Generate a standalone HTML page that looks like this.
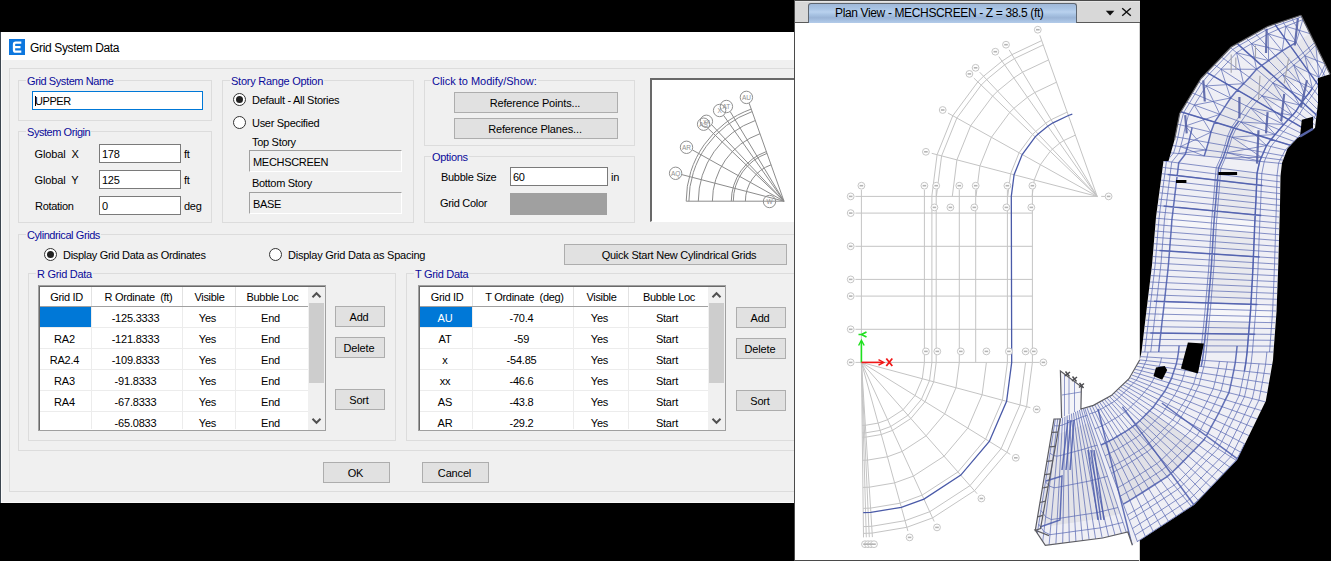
<!DOCTYPE html>
<html><head><meta charset="utf-8"><title>Grid System Data</title>
<style>
*{box-sizing:border-box;margin:0;padding:0}
html,body{width:1331px;height:561px;overflow:hidden;background:#000}
body{font-family:"Liberation Sans",sans-serif;font-size:11px;color:#000;position:relative}
.abs,.t,.grp,.lbl,.inp,.btn,.sunk,.radio{position:absolute}
.t{white-space:pre;line-height:13px;height:13px;letter-spacing:-0.3px;margin-top:1px}
#dlg{position:absolute;left:0;top:32px;width:795px;height:471px;background:#f0f0f0;border-left:1px solid #1c2b3a}
#ttl{position:absolute;left:0;top:0;width:794px;height:28px;background:#fff}
.grp{border:1px solid #dcdcdc}
.lbl{background:#f0f0f0;color:#0a0a9a;white-space:pre;line-height:13px;height:13px;padding:0 1px;letter-spacing:-0.3px;margin-top:1px}
.inp{background:#fff;border:1px solid #7a7a7a;line-height:18px;padding-left:2px;white-space:pre;letter-spacing:-0.25px}
.btn{background:#e1e1e1;border:1px solid #adadad;text-align:center;white-space:pre;letter-spacing:-0.16px;padding-top:1px;padding-right:2px}
.sunk{background:#f0f0f0;border:1px solid;border-color:#a0a0a0 #fff #fff #a0a0a0;line-height:22px;padding-left:3px;white-space:pre;letter-spacing:-0.3px}
.radio{width:13px;height:13px;border-radius:50%;border:1px solid #333;background:#fff}
.radio.on::after{content:"";position:absolute;left:2px;top:2px;width:7px;height:7px;border-radius:50%;background:#222}
.tbl{position:absolute;background:#fff;border:1px solid #a0a0a0}
.tbl .in{position:absolute;left:0;top:0;right:0;bottom:0;border:1px solid #696969;border-right:none;border-bottom:none}
.c{position:absolute;text-align:center;white-space:pre;line-height:13px;height:13px;letter-spacing:-0.3px}
.vl{position:absolute;width:1px;background:#e2e2e2}
.hl{position:absolute;height:1px;background:#e8e8e8}
</style></head><body>
<div class="abs" style="left:0px;top:32px;width:794px;height:471px;background:#f0f0f0"></div>
<div class="abs" style="left:0px;top:32px;width:1px;height:471px;background:#3c4650"></div>
<div class="abs" style="left:1px;top:60px;width:1px;height:443px;background:#fafafa"></div>
<div class="abs" style="left:1px;top:502px;width:793px;height:1px;background:#fafafa"></div>
<div class="abs" style="left:1px;top:32px;width:793px;height:28px;background:#fff"></div>
<svg class="abs" style="left:9px;top:39px" width="16" height="16" viewBox="0 0 16 16"><rect width="16" height="16" fill="#0c76de"/><path d="M12.3 3.7H6.7Q5 3.7 5 5.4V11Q5 12.7 6.7 12.7H12.3M5 8.2H11.5" fill="none" stroke="#fff" stroke-width="2.3"/></svg>
<div class="t" style="left:30px;top:40px;font-size:12px;letter-spacing:-0.35px;line-height:14px;height:14px">Grid System Data</div>
<div class="grp" style="left:9px;top:68px;width:800px;height:424px"></div>
<div class="grp" style="left:18px;top:80px;width:194px;height:41px"></div>
<div class="lbl" style="left:26px;top:74px;letter-spacing:-0.4px">Grid System Name</div>
<div class="abs" style="left:32px;top:91px;width:171px;height:19px;background:#fff;border:1px solid #0078d7;line-height:18px;padding-left:2px;white-space:pre;letter-spacing:-0.45px">UPPER</div>
<div class="abs" style="left:35px;top:96px;width:1px;height:10px;background:#000"></div>
<div class="grp" style="left:18px;top:131px;width:194px;height:92px"></div>
<div class="lbl" style="left:26px;top:125px;letter-spacing:-0.45px">System Origin</div>
<div class="t" style="left:34.5px;top:147px;letter-spacing:-0.12px">Global  X</div>
<div class="t" style="left:34.5px;top:173px;letter-spacing:-0.12px">Global  Y</div>
<div class="t" style="left:35px;top:199px;">Rotation</div>
<div class="inp" style="left:99px;top:144px;width:82px;height:19px;">178</div>
<div class="inp" style="left:99px;top:170px;width:82px;height:19px;">125</div>
<div class="inp" style="left:99px;top:196px;width:82px;height:19px;">0</div>
<div class="t" style="left:184px;top:147px;">ft</div>
<div class="t" style="left:184px;top:173px;">ft</div>
<div class="t" style="left:184px;top:199px;">deg</div>
<div class="grp" style="left:222px;top:80px;width:192px;height:143px"></div>
<div class="lbl" style="left:230px;top:74px;letter-spacing:-0.25px">Story Range Option</div>
<div class="radio on" style="left:233px;top:93px"></div>
<div class="t" style="left:252px;top:93px;">Default - All Stories</div>
<div class="radio" style="left:233px;top:116px"></div>
<div class="t" style="left:252px;top:116px;">User Specified</div>
<div class="t" style="left:252px;top:135px;">Top Story</div>
<div class="sunk" style="left:249px;top:150px;width:153px;height:22px;">MECHSCREEN</div>
<div class="t" style="left:252px;top:176px;">Bottom Story</div>
<div class="sunk" style="left:249px;top:192px;width:153px;height:22px;">BASE</div>
<div class="grp" style="left:424px;top:80px;width:211px;height:66px"></div>
<div class="lbl" style="left:431px;top:74px;letter-spacing:-0.02px">Click to Modify/Show:</div>
<div class="btn" style="left:454px;top:92px;width:164px;height:21px;line-height:19px">Reference Points...</div>
<div class="btn" style="left:454px;top:118px;width:164px;height:21px;line-height:19px">Reference Planes...</div>
<div class="grp" style="left:424px;top:156px;width:211px;height:67px"></div>
<div class="lbl" style="left:431px;top:150px;letter-spacing:-0.3px">Options</div>
<div class="t" style="left:441px;top:170px;">Bubble Size</div>
<div class="inp" style="left:510px;top:167px;width:98px;height:19px;">60</div>
<div class="t" style="left:611px;top:170px;">in</div>
<div class="t" style="left:440px;top:196px;">Grid Color</div>
<div class="abs" style="left:510px;top:193px;width:97px;height:22px;background:#a0a0a0"></div>
<div class="grp" style="left:18px;top:234px;width:783px;height:217px"></div>
<div class="lbl" style="left:26px;top:228px;letter-spacing:-0.42px">Cylindrical Grids</div>
<div class="radio on" style="left:44px;top:248px"></div>
<div class="t" style="left:63px;top:248px;">Display Grid Data as Ordinates</div>
<div class="radio" style="left:269px;top:248px"></div>
<div class="t" style="left:288px;top:248px;letter-spacing:-0.23px">Display Grid Data as Spacing</div>
<div class="btn" style="left:564px;top:244px;width:223px;height:21px;line-height:19px;padding-right:0;padding-left:7px;letter-spacing:-0.24px">Quick Start New Cylindrical Grids</div>
<div class="grp" style="left:28px;top:273px;width:368px;height:168px"></div>
<div class="lbl" style="left:36px;top:267px;letter-spacing:-0.3px">R Grid Data</div>
<div class="grp" style="left:406px;top:273px;width:405px;height:168px"></div>
<div class="lbl" style="left:414px;top:267px;letter-spacing:-0.3px">T Grid Data</div>
<div class="tbl" style="left:38px;top:285px;width:288px;height:146px"><div class="in"></div></div>
<div class="abs" style="left:40px;top:306px;width:268px;height:1px;background:#a0a0a0"></div>
<div class="abs" style="left:91px;top:287px;width:1px;height:19px;background:#e2e2e2"></div>
<div class="abs" style="left:91px;top:307px;width:1px;height:122px;background:#ececec"></div>
<div class="abs" style="left:182px;top:287px;width:1px;height:19px;background:#e2e2e2"></div>
<div class="abs" style="left:182px;top:307px;width:1px;height:122px;background:#ececec"></div>
<div class="abs" style="left:235px;top:287px;width:1px;height:19px;background:#e2e2e2"></div>
<div class="abs" style="left:235px;top:307px;width:1px;height:122px;background:#ececec"></div>
<div class="abs" style="left:308px;top:287px;width:1px;height:142px;background:#e8e8e8"></div>
<div class="abs" style="left:40px;top:327px;width:268px;height:1px;background:#ececec"></div>
<div class="abs" style="left:40px;top:348px;width:268px;height:1px;background:#ececec"></div>
<div class="abs" style="left:40px;top:369px;width:268px;height:1px;background:#ececec"></div>
<div class="abs" style="left:40px;top:390px;width:268px;height:1px;background:#ececec"></div>
<div class="abs" style="left:40px;top:411px;width:268px;height:1px;background:#ececec"></div>
<div class="c" style="left:41px;top:291px;width:51px">Grid ID</div>
<div class="c" style="left:93px;top:291px;width:91px">R Ordinate  (ft)</div>
<div class="c" style="left:183px;top:291px;width:53px">Visible</div>
<div class="c" style="left:236px;top:291px;width:73px">Bubble Loc</div>
<div class="abs" style="left:40px;top:307px;width:51px;height:20px;background:#0078d7"></div>
<div class="c" style="left:39px;top:312px;width:51px;color:#fff;letter-spacing:-0.2px"></div>
<div class="c" style="left:90px;top:312px;width:91px;color:#000;letter-spacing:-0.2px">-125.3333</div>
<div class="c" style="left:181px;top:312px;width:53px;color:#000;letter-spacing:-0.2px">Yes</div>
<div class="c" style="left:234px;top:312px;width:73px;color:#000;letter-spacing:-0.2px">End</div>
<div class="c" style="left:39px;top:333px;width:51px;color:#000;letter-spacing:-0.2px">RA2</div>
<div class="c" style="left:90px;top:333px;width:91px;color:#000;letter-spacing:-0.2px">-121.8333</div>
<div class="c" style="left:181px;top:333px;width:53px;color:#000;letter-spacing:-0.2px">Yes</div>
<div class="c" style="left:234px;top:333px;width:73px;color:#000;letter-spacing:-0.2px">End</div>
<div class="c" style="left:39px;top:354px;width:51px;color:#000;letter-spacing:-0.2px">RA2.4</div>
<div class="c" style="left:90px;top:354px;width:91px;color:#000;letter-spacing:-0.2px">-109.8333</div>
<div class="c" style="left:181px;top:354px;width:53px;color:#000;letter-spacing:-0.2px">Yes</div>
<div class="c" style="left:234px;top:354px;width:73px;color:#000;letter-spacing:-0.2px">End</div>
<div class="c" style="left:39px;top:375px;width:51px;color:#000;letter-spacing:-0.2px">RA3</div>
<div class="c" style="left:90px;top:375px;width:91px;color:#000;letter-spacing:-0.2px">-91.8333</div>
<div class="c" style="left:181px;top:375px;width:53px;color:#000;letter-spacing:-0.2px">Yes</div>
<div class="c" style="left:234px;top:375px;width:73px;color:#000;letter-spacing:-0.2px">End</div>
<div class="c" style="left:39px;top:396px;width:51px;color:#000;letter-spacing:-0.2px">RA4</div>
<div class="c" style="left:90px;top:396px;width:91px;color:#000;letter-spacing:-0.2px">-67.8333</div>
<div class="c" style="left:181px;top:396px;width:53px;color:#000;letter-spacing:-0.2px">Yes</div>
<div class="c" style="left:234px;top:396px;width:73px;color:#000;letter-spacing:-0.2px">End</div>
<div class="c" style="left:39px;top:417px;width:51px;color:#000;letter-spacing:-0.2px"></div>
<div class="c" style="left:90px;top:417px;width:91px;color:#000;letter-spacing:-0.2px">-65.0833</div>
<div class="c" style="left:181px;top:417px;width:53px;color:#000;letter-spacing:-0.2px">Yes</div>
<div class="c" style="left:234px;top:417px;width:73px;color:#000;letter-spacing:-0.2px">End</div>
<div class="abs" style="left:308px;top:287px;width:17px;height:143px;background:#f0f0f0"></div>
<div class="abs" style="left:309px;top:303px;width:15px;height:80px;background:#cdcdcd"></div>
<svg class="abs" style="left:311px;top:291px" width="11" height="8" viewBox="0 0 11 8"><path d="M1.5 6.2L5.5 2.2L9.5 6.2" fill="none" stroke="#505050" stroke-width="2"/></svg>
<svg class="abs" style="left:311px;top:417px" width="11" height="8" viewBox="0 0 11 8"><path d="M1.5 1.8L5.5 5.8L9.5 1.8" fill="none" stroke="#505050" stroke-width="2"/></svg>
<div class="tbl" style="left:418px;top:285px;width:308px;height:146px"><div class="in"></div></div>
<div class="abs" style="left:420px;top:306px;width:288px;height:1px;background:#a0a0a0"></div>
<div class="abs" style="left:472px;top:287px;width:1px;height:19px;background:#e2e2e2"></div>
<div class="abs" style="left:472px;top:307px;width:1px;height:122px;background:#ececec"></div>
<div class="abs" style="left:573px;top:287px;width:1px;height:19px;background:#e2e2e2"></div>
<div class="abs" style="left:573px;top:307px;width:1px;height:122px;background:#ececec"></div>
<div class="abs" style="left:628px;top:287px;width:1px;height:19px;background:#e2e2e2"></div>
<div class="abs" style="left:628px;top:307px;width:1px;height:122px;background:#ececec"></div>
<div class="abs" style="left:708px;top:287px;width:1px;height:142px;background:#e8e8e8"></div>
<div class="abs" style="left:420px;top:327px;width:288px;height:1px;background:#ececec"></div>
<div class="abs" style="left:420px;top:348px;width:288px;height:1px;background:#ececec"></div>
<div class="abs" style="left:420px;top:369px;width:288px;height:1px;background:#ececec"></div>
<div class="abs" style="left:420px;top:390px;width:288px;height:1px;background:#ececec"></div>
<div class="abs" style="left:420px;top:411px;width:288px;height:1px;background:#ececec"></div>
<div class="c" style="left:421px;top:291px;width:52px">Grid ID</div>
<div class="c" style="left:474px;top:291px;width:101px">T Ordinate  (deg)</div>
<div class="c" style="left:574px;top:291px;width:55px">Visible</div>
<div class="c" style="left:629px;top:291px;width:80px">Bubble Loc</div>
<div class="abs" style="left:420px;top:307px;width:52px;height:20px;background:#0078d7"></div>
<div class="c" style="left:419px;top:312px;width:52px;color:#fff;letter-spacing:-0.2px">AU</div>
<div class="c" style="left:471px;top:312px;width:101px;color:#000;letter-spacing:-0.2px">-70.4</div>
<div class="c" style="left:572px;top:312px;width:55px;color:#000;letter-spacing:-0.2px">Yes</div>
<div class="c" style="left:627px;top:312px;width:80px;color:#000;letter-spacing:-0.2px">Start</div>
<div class="c" style="left:419px;top:333px;width:52px;color:#000;letter-spacing:-0.2px">AT</div>
<div class="c" style="left:471px;top:333px;width:101px;color:#000;letter-spacing:-0.2px">-59</div>
<div class="c" style="left:572px;top:333px;width:55px;color:#000;letter-spacing:-0.2px">Yes</div>
<div class="c" style="left:627px;top:333px;width:80px;color:#000;letter-spacing:-0.2px">Start</div>
<div class="c" style="left:419px;top:354px;width:52px;color:#000;letter-spacing:-0.2px">x</div>
<div class="c" style="left:471px;top:354px;width:101px;color:#000;letter-spacing:-0.2px">-54.85</div>
<div class="c" style="left:572px;top:354px;width:55px;color:#000;letter-spacing:-0.2px">Yes</div>
<div class="c" style="left:627px;top:354px;width:80px;color:#000;letter-spacing:-0.2px">Start</div>
<div class="c" style="left:419px;top:375px;width:52px;color:#000;letter-spacing:-0.2px">xx</div>
<div class="c" style="left:471px;top:375px;width:101px;color:#000;letter-spacing:-0.2px">-46.6</div>
<div class="c" style="left:572px;top:375px;width:55px;color:#000;letter-spacing:-0.2px">Yes</div>
<div class="c" style="left:627px;top:375px;width:80px;color:#000;letter-spacing:-0.2px">Start</div>
<div class="c" style="left:419px;top:396px;width:52px;color:#000;letter-spacing:-0.2px">AS</div>
<div class="c" style="left:471px;top:396px;width:101px;color:#000;letter-spacing:-0.2px">-43.8</div>
<div class="c" style="left:572px;top:396px;width:55px;color:#000;letter-spacing:-0.2px">Yes</div>
<div class="c" style="left:627px;top:396px;width:80px;color:#000;letter-spacing:-0.2px">Start</div>
<div class="c" style="left:419px;top:417px;width:52px;color:#000;letter-spacing:-0.2px">AR</div>
<div class="c" style="left:471px;top:417px;width:101px;color:#000;letter-spacing:-0.2px">-29.2</div>
<div class="c" style="left:572px;top:417px;width:55px;color:#000;letter-spacing:-0.2px">Yes</div>
<div class="c" style="left:627px;top:417px;width:80px;color:#000;letter-spacing:-0.2px">Start</div>
<div class="abs" style="left:708px;top:287px;width:17px;height:143px;background:#f0f0f0"></div>
<div class="abs" style="left:709px;top:303px;width:15px;height:80px;background:#cdcdcd"></div>
<svg class="abs" style="left:711px;top:291px" width="11" height="8" viewBox="0 0 11 8"><path d="M1.5 6.2L5.5 2.2L9.5 6.2" fill="none" stroke="#505050" stroke-width="2"/></svg>
<svg class="abs" style="left:711px;top:417px" width="11" height="8" viewBox="0 0 11 8"><path d="M1.5 1.8L5.5 5.8L9.5 1.8" fill="none" stroke="#505050" stroke-width="2"/></svg>
<div class="btn" style="left:335px;top:306px;width:50px;height:21px;line-height:19px">Add</div>
<div class="btn" style="left:335px;top:337px;width:50px;height:21px;line-height:19px">Delete</div>
<div class="btn" style="left:335px;top:389px;width:50px;height:21px;line-height:19px">Sort</div>
<div class="btn" style="left:736px;top:307px;width:50px;height:21px;line-height:19px">Add</div>
<div class="btn" style="left:736px;top:338px;width:50px;height:21px;line-height:19px">Delete</div>
<div class="btn" style="left:736px;top:390px;width:50px;height:21px;line-height:19px">Sort</div>
<div class="btn" style="left:323px;top:462px;width:67px;height:21px;line-height:19px">OK</div>
<div class="btn" style="left:422px;top:462px;width:67px;height:21px;line-height:19px">Cancel</div>
<div class="abs" style="left:650px;top:78px;width:160px;height:144px;background:#fff;border:2px solid #696969;border-right:none;border-bottom:1px solid #fff"></div>
<svg class="abs" style="left:652px;top:80px" width="143" height="141" viewBox="652 80 143 141"><g fill="none" stroke="#8c8c8c" stroke-width="1"><path d="M686.2 201.2A97.8 97.8 0 0 1 751.2 109.1"/><path d="M688.9 201.2A95.1 95.1 0 0 1 752.1 111.6"/><path d="M698.3 201.2A85.7 85.7 0 0 1 755.3 120.5"/><path d="M712.4 201.2A71.6 71.6 0 0 1 760 133.7"/><path d="M731.3 201.2A52.7 52.7 0 0 1 766.3 151.6"/><path d="M733.3 201.2A50.7 50.7 0 0 1 767 153.4"/><path d="M745.4 201.2A38.6 38.6 0 0 1 771.1 164.8"/><path d="M784 201.2L686.2 201.2"/><path d="M784 201.2L681.8 174.6"/><path d="M784 201.2L692.3 149.9"/><path d="M784 201.2L708.2 128.5"/><path d="M784 201.2L711.8 124.9"/><path d="M784 201.2L723.6 115.4"/><path d="M784 201.2L730.2 111.6"/><path d="M784 201.2L749.1 103.1"/><circle cx="769.5" cy="201.5" r="6.2" stroke="#909090"/><circle cx="675.6" cy="173.3" r="6.2" stroke="#909090"/><circle cx="686.5" cy="147.3" r="6.2" stroke="#909090"/><circle cx="703.6" cy="124.2" r="6.2" stroke="#909090"/><circle cx="706.4" cy="121.3" r="6.2" stroke="#909090"/><circle cx="719.6" cy="110.5" r="6.2" stroke="#909090"/><circle cx="726.4" cy="106.5" r="6.2" stroke="#909090"/><circle cx="746.4" cy="97.4" r="6.2" stroke="#909090"/></g><g font-family="Liberation Sans" font-size="6.5" fill="#909090" text-anchor="middle"><text x="769.5" y="203.8">W</text><text x="675.6" y="175.6">AQ</text><text x="686.5" y="149.6">AR</text><text x="703.6" y="126.5">AS</text><text x="706.4" y="123.6">xx</text><text x="719.6" y="112.8">X</text><text x="726.4" y="108.8">AT</text><text x="746.4" y="99.7">AU</text></g></svg>
<div class="abs" style="left:794px;top:0;width:346px;height:561px;background:#fff"></div>
<div class="abs" style="left:794px;top:0;width:1px;height:561px;background:#4a4a4a"></div>
<div class="abs" style="left:1139px;top:0;width:1px;height:561px;background:#cfcfcf"></div>
<div class="abs" style="left:795px;top:560px;width:344px;height:1px;background:#4a4a4a"></div>
<div class="abs" style="left:795px;top:0;width:345px;height:23px;background:#d8d8d8;border-top:1px solid #4a4a4a;border-bottom:1px solid #5a5a5a"></div>
<div class="abs" style="left:795px;top:1px;width:345px;height:1px;background:#e6e6e6"></div>
<div class="abs" style="left:808px;top:3px;width:269px;height:20px;border:1px solid #5e6670;border-bottom:none;border-radius:3px 3px 0 0;background:linear-gradient(#a0b8d8 0%,#a9c4e4 25%,#b9d1ee 42%,#a9c4e4 55%,#9ab4d6 72%,#a6c0e1 86%,#b3cbe9 100%)"></div>
<div class="t" style="left:835px;top:5px;font-size:12px;line-height:14px;height:14px;letter-spacing:-0.36px">Plan View - MECHSCREEN - Z = 38.5 (ft)</div>
<svg class="abs" style="left:1104px;top:6px" width="30" height="13" viewBox="1104 6 30 13"><path d="M1105.8 10.8h8.6l-4.3 4.6z" fill="#111"/><path d="M1122.2 8.2l8.6 7.6M1130.8 8.2l-8.6 7.6" stroke="#111" stroke-width="1.4" fill="none"/></svg>
<svg class="abs" style="left:796px;top:23px" width="343" height="536" viewBox="796 23 343 536"><g fill="none" stroke="#c4c4c4" stroke-width="1"><path d="M931.8 196.4L937.1 154.7L952.8 115.7L977.8 81.9L983.6 76.2L1002 61.2L1012 54.6L1041.7 40.6"/><path d="M936.4 196.4L941.6 155.9L956.9 118L981.2 85.1L986.7 79.6L1004.6 64.9L1014.4 58.6L1043.3 44.9"/><path d="M952.3 196.4L956.9 159.9L970.7 125.7L992.6 96.1L997.6 91.1L1013.8 77.9L1022.5 72.2L1048.6 59.9"/><path d="M976 196.4L979.9 165.9L991.4 137.3L1009.7 112.5L1013.9 108.3L1027.4 97.3L1034.8 92.5L1056.5 82.2"/><path d="M1007.7 196.4L1010.6 173.8L1019.1 152.7L1032.6 134.4L1035.7 131.4L1045.7 123.2L1051.1 119.7L1067.2 112.1"/><path d="M1032.1 196.4L1034.2 180L1040.4 164.7L1050.2 151.4L1052.5 149.1L1059.7 143.2L1063.7 140.6L1075.4 135.1"/><path d="M1097.2 196.4L931.7 153.3"/><path d="M1097.2 196.4L947.9 113"/><path d="M1097.2 196.4L973.8 78"/><path d="M1097.2 196.4L979.7 72.2"/><path d="M1097.2 196.4L998.8 56.6"/><path d="M1097.2 196.4L1009.1 49.8"/><path d="M1097.2 196.4L1039.8 35.3"/><path d="M855.4 196.4H1032.4"/><path d="M855.4 213.1H1032.4"/><path d="M855.4 246.3H1032.4"/><path d="M855.4 279.4H1032.4"/><path d="M855.4 296.1H1032.4"/><path d="M855.4 329.3H1032.4"/><path d="M855.4 362.4H1032.4"/><path d="M1032.4 196.4H1097.2M1101.2 196.4h4"/><path d="M1032.4 362.4h7"/><path d="M861.4 190V362.4"/><path d="M924.4 190V362.4"/><path d="M931.9 196.4V362.4"/><path d="M936.2 190V362.4"/><path d="M959.3 190V362.4"/><path d="M975.7 190V362.4"/><path d="M1007.4 190V362.4"/><path d="M1032.4 190V362.4"/><path d="M924.4 362.4L922.3 378.7L915 395.5L903.1 409.7L887.6 419.7L878.1 423.1L865.4 425.3L862.2 425.4"/><path d="M931.9 362.4L929.5 380.6L921.4 399.4L908 415.3L890.7 426.5L880.1 430.4L865.8 432.8L862.3 432.9"/><path d="M936.2 362.4L933.7 381.8L925 401.7L910.9 418.5L892.5 430.4L881.3 434.5L866.1 437.1L862.3 437.2"/><path d="M959.3 362.4L956 387.7L944.7 413.8L926.1 435.8L902.2 451.4L887.4 456.8L867.5 460.1L862.6 460.3"/><path d="M986.4 362.4L982.1 394.8L967.8 428.1L944.1 456.2L913.4 476.1L894.6 482.9L869.2 487.2L862.9 487.4"/><path d="M1007.4 362.4L1002.4 400.2L985.6 439.1L958 471.9L922.2 495.1L900.2 503.2L870.6 508.1L863.2 508.4"/><path d="M1025.6 362.4L1020 404.9L1001.1 448.7L970 485.6L929.8 511.7L905 520.7L871.7 526.3L863.4 526.6"/><path d="M1032.4 362.4L1026.6 406.7L1006.9 452.3L974.5 490.7L932.6 517.9L906.8 527.3L872.1 533.1L863.5 533.4"/><path d="M861.4 362.4L1030.4 407.7"/><path d="M861.4 362.4L1010.3 454.4"/><path d="M861.4 362.4L977.1 493.7"/><path d="M861.4 362.4L934.2 521.5"/><path d="M861.4 362.4L907.9 531.1"/><path d="M861.4 362.4L872.4 537.1"/><path d="M861.4 362.4L869.3 537.2"/><path d="M861.4 362.4L866.3 537.3"/><path d="M861.4 362.4L863.5 537.4"/></g><path d="M1072.3 114.1L1068.4 115.5L1053 122.8L1047.7 126.2L1038.2 134L1035.2 136.9L1022.2 154.5L1014.1 174.7L1011.3 196.4L1011.7 362.4L1006.6 401.3L989.3 441.4L960.8 475.1L924 499.1L901.3 507.3L870.8 512.4L863.2 512.7" fill="none" stroke="#4a5aa8" stroke-width="1.3"/><g fill="#fff" stroke="#c6c6c6" stroke-width="1"><circle cx="925.9" cy="151.8" r="3.4"/><circle cx="942.7" cy="110" r="3.4"/><circle cx="969.4" cy="73.9" r="3.4"/><circle cx="975.6" cy="67.8" r="3.4"/><circle cx="995.3" cy="51.7" r="3.4"/><circle cx="1006" cy="44.7" r="3.4"/><circle cx="1037.8" cy="29.7" r="3.4"/><circle cx="1108.6" cy="196.4" r="3.4"/><circle cx="850.7" cy="196.4" r="3.4"/><circle cx="850.7" cy="213.1" r="3.4"/><circle cx="850.7" cy="246.3" r="3.4"/><circle cx="850.7" cy="279.4" r="3.4"/><circle cx="850.7" cy="296.1" r="3.4"/><circle cx="850.7" cy="329.3" r="3.4"/><circle cx="850.7" cy="362.4" r="3.4"/><circle cx="861.4" cy="185.7" r="3.4"/><circle cx="924.4" cy="185.7" r="3.4"/><circle cx="936.2" cy="185.7" r="3.4"/><circle cx="959.3" cy="185.7" r="3.4"/><circle cx="975.7" cy="185.7" r="3.4"/><circle cx="1007.4" cy="185.7" r="3.4"/><circle cx="1032.4" cy="185.7" r="3.4"/><circle cx="934.4" cy="207.4" r="3.4"/><circle cx="950.4" cy="207.4" r="3.4"/><circle cx="974.3" cy="207.4" r="3.4"/><circle cx="1006.4" cy="207.4" r="3.4"/><circle cx="1031.3" cy="207.4" r="3.4"/><circle cx="925.9" cy="351.4" r="3.4"/><circle cx="937.3" cy="351.4" r="3.4"/><circle cx="960.8" cy="351.4" r="3.4"/><circle cx="986.4" cy="351.4" r="3.4"/><circle cx="1008.9" cy="351.4" r="3.4"/><circle cx="1025.6" cy="351.4" r="3.4"/><circle cx="1033.8" cy="351.4" r="3.4"/><circle cx="1043.4" cy="362.4" r="3.4"/><circle cx="1036.7" cy="409.4" r="3.4"/><circle cx="1015.8" cy="457.8" r="3.4"/><circle cx="981.4" cy="498.5" r="3.4"/><circle cx="937" cy="527.4" r="3.4"/><circle cx="909.6" cy="537.4" r="3.4"/><circle cx="865" cy="544.2" r="3.4"/><circle cx="868" cy="544.2" r="3.4"/><circle cx="871" cy="544.2" r="3.4"/><circle cx="874" cy="544.2" r="3.4"/></g><g fill="#b4b4b4"><rect x="924.1" y="151" width="3.6" height="1.6"/><rect x="940.9" y="109.2" width="3.6" height="1.6"/><rect x="967.6" y="73.1" width="3.6" height="1.6"/><rect x="973.8" y="67" width="3.6" height="1.6"/><rect x="993.5" y="50.9" width="3.6" height="1.6"/><rect x="1004.2" y="43.9" width="3.6" height="1.6"/><rect x="1036" y="28.9" width="3.6" height="1.6"/><rect x="1106.8" y="195.6" width="3.6" height="1.6"/><rect x="848.9" y="195.6" width="3.6" height="1.6"/><rect x="848.9" y="212.3" width="3.6" height="1.6"/><rect x="848.9" y="245.5" width="3.6" height="1.6"/><rect x="848.9" y="278.6" width="3.6" height="1.6"/><rect x="848.9" y="295.3" width="3.6" height="1.6"/><rect x="848.9" y="328.5" width="3.6" height="1.6"/><rect x="848.9" y="361.6" width="3.6" height="1.6"/><rect x="859.6" y="184.9" width="3.6" height="1.6"/><rect x="922.6" y="184.9" width="3.6" height="1.6"/><rect x="934.4" y="184.9" width="3.6" height="1.6"/><rect x="957.5" y="184.9" width="3.6" height="1.6"/><rect x="973.9" y="184.9" width="3.6" height="1.6"/><rect x="1005.6" y="184.9" width="3.6" height="1.6"/><rect x="1030.6" y="184.9" width="3.6" height="1.6"/><rect x="932.6" y="206.6" width="3.6" height="1.6"/><rect x="948.6" y="206.6" width="3.6" height="1.6"/><rect x="972.5" y="206.6" width="3.6" height="1.6"/><rect x="1004.6" y="206.6" width="3.6" height="1.6"/><rect x="1029.5" y="206.6" width="3.6" height="1.6"/><rect x="924.1" y="350.6" width="3.6" height="1.6"/><rect x="935.5" y="350.6" width="3.6" height="1.6"/><rect x="959" y="350.6" width="3.6" height="1.6"/><rect x="984.6" y="350.6" width="3.6" height="1.6"/><rect x="1007.1" y="350.6" width="3.6" height="1.6"/><rect x="1023.8" y="350.6" width="3.6" height="1.6"/><rect x="1032" y="350.6" width="3.6" height="1.6"/><rect x="1041.6" y="361.6" width="3.6" height="1.6"/><rect x="1034.9" y="408.6" width="3.6" height="1.6"/><rect x="1014" y="457" width="3.6" height="1.6"/><rect x="979.6" y="497.7" width="3.6" height="1.6"/><rect x="935.2" y="526.6" width="3.6" height="1.6"/><rect x="907.8" y="536.6" width="3.6" height="1.6"/><rect x="863.2" y="543.4" width="3.6" height="1.6"/><rect x="866.2" y="543.4" width="3.6" height="1.6"/><rect x="869.2" y="543.4" width="3.6" height="1.6"/><rect x="872.2" y="543.4" width="3.6" height="1.6"/></g><path d="M861.4 362.4V341" stroke="#1ee01e" stroke-width="1.6" fill="none"/><path d="M858.6 345.5L861.4 340.3L864.2 345.5" stroke="#1ee01e" stroke-width="1.4" fill="none"/><path d="M866.5 332l-5 2.5M866.5 337l-5-2.5h-3" stroke="#1ee01e" stroke-width="1.7" fill="none"/><path d="M861.4 362.4H883" stroke="#f01818" stroke-width="1.6" fill="none"/><path d="M878.5 359.6L883.8 362.4L878.5 365.2" stroke="#f01818" stroke-width="1.4" fill="none"/><path d="M886.3 358.5l6 7.5M892.3 358.5l-6 7.5" stroke="#f01818" stroke-width="1.8" fill="none"/></svg>
<svg class="abs" style="left:1030px;top:0" width="301" height="561" viewBox="1030 0 301 561"><path d="M1060.4 371L1081.4 386.7L1081 409L1061.6 418Z" fill="#f4f4f8"/><path d="M1064.5 374.5V416M1069 378V414M1074.5 382V412M1062 395L1081 392" stroke="#5564b0" stroke-opacity="0.7" stroke-width="0.9" fill="none"/><clipPath id="msil"><path d="M1301 15.2L1267.6 26.5L1231.2 47L1201 78.5L1179.7 113.6L1174.5 140L1168.5 161L1163.5 161L1156 217L1152 265L1146.5 310L1141.5 352L1141.5 352L1139.7 360L1131 377L1129 378.7L1111.2 395.6L1093.4 405.4L1080.9 409L1061.6 418L1054 419L1035.3 530.3L1045.3 545.3L1102.7 538L1127.8 532L1132.4 545.3L1194 505L1237 460L1265.8 401L1273 360L1273.5 352L1273.5 352L1276.5 312L1278.3 265L1280 205L1280.5 176L1280.5 176L1282 163L1287.5 148.5L1297.5 138L1315 128L1318 103L1318 78L1330 74.2Z"/></clipPath><path d="M1301 15.2L1267.6 26.5L1231.2 47L1201 78.5L1179.7 113.6L1174.5 140L1168.5 161L1163.5 161L1156 217L1152 265L1146.5 310L1141.5 352L1141.5 352L1139.7 360L1131 377L1129 378.7L1111.2 395.6L1093.4 405.4L1080.9 409L1061.6 418L1054 419L1035.3 530.3L1045.3 545.3L1102.7 538L1127.8 532L1132.4 545.3L1194 505L1237 460L1265.8 401L1273 360L1273.5 352L1273.5 352L1276.5 312L1278.3 265L1280 205L1280.5 176L1280.5 176L1282 163L1287.5 148.5L1297.5 138L1315 128L1318 103L1318 78L1330 74.2Z" fill="#efeff5"/><g clip-path="url(#msil)"><path d="M1149.6 410.8L1146.3 414.1L1143 417.5L1139.7 420.7L1136.2 423.8L1132.5 426.6L1128.8 429.4L1124.9 431.8L1121 434.1L1117.1 436.5L1113.2 438.8L1109.2 441L1105.1 443L1101 445L1123.3 504.2L1129.8 500.3L1136.1 496.4L1142.4 492.5L1148.6 488.5L1154.8 484.5L1160.9 480.6L1167.2 476.6L1172.7 471.8L1178 466.6L1183.2 461.4L1188.4 456.1L1193.5 450.7L1198.7 445.3Z" fill="#e1e1e7"/><path d="M1089.7 422.8L1087.8 423.4L1085.3 424L1082.8 425L1080.4 425.9L1077.9 426.8L1075.3 427.8L1072.7 428.7L1070.1 429.7L1067.4 430.6L1064.6 431.7L1061.8 432.7L1058.9 433.4L1056 433.3L1053.2 432.5L1040 516.1L1045 523L1050.8 525.8L1056.9 525L1063 524.1L1069 523.2L1074.9 522.4L1080.8 521.5L1086.7 520.6L1092.6 519.8L1098.5 519L1104.2 517.6L1110 516.1L1115.8 514.7L1120.1 513.7Z" fill="#e3e3e8"/><path d="M1309.9 33.6L1303.1 38.1L1296.2 42.4L1290.4 45.9L1282.2 50.9L1275.4 55.8L1268.6 60.6L1261.6 65.5L1256.5 69.3L1249.4 77.4L1243.5 83.7L1237.4 90.1L1230.6 98L1224.9 106.7L1219.8 114.3L1214.6 122.1L1210.9 132.2L1208.3 142.6L1206.1 150L1204.2 156L1239.7 159.4L1241.5 154.6L1243.7 148.8L1246.5 140.7L1250.7 133.2L1255.3 127.2L1259.7 121.5L1264.6 115L1270 108.9L1274.8 104L1279.2 99L1284.1 92.3L1287.5 88.8L1292.2 84.2L1296.9 79.6L1301.5 74.8L1307 69.2L1310.7 64.8L1315.3 59.2L1319.9 53Z" fill="#e7e7ec"/><path d="M1216.2 167.8L1215.6 173.9L1215.1 180L1214.6 186.2L1214.1 192.3L1213.6 198.4L1213 204.6L1212.5 210.7L1212 216.8L1211.4 223L1211.1 229.1L1210.7 235.3L1210.3 241.4L1210 247.6L1209.6 253.8L1209.2 259.9L1208.8 266.1L1208.4 272.2L1207.8 278.3L1207.3 284.5L1206.8 290.6L1206.2 296.8L1205.7 302.9L1205.2 309L1204.6 315.2L1204 321.3L1203.4 327.5L1202.7 333.6L1202.1 339.7L1201.5 345.9L1200.9 352L1247.1 352L1247.6 346L1248.1 340.1L1248.6 334.1L1249.1 328.2L1249.6 322.2L1250.1 316.3L1250.6 310.3L1250.9 304.3L1251.3 298.4L1251.6 292.4L1251.9 286.4L1252.3 280.5L1252.6 274.5L1252.9 268.5L1253.2 262.6L1253.4 256.6L1253.7 250.6L1253.9 244.6L1254.2 238.7L1254.4 232.7L1254.6 226.7L1254.9 220.7L1255.2 214.8L1255.5 208.8L1255.8 202.8L1256.1 196.9L1256.3 190.9L1256.6 184.9L1256.8 179L1257.1 173Z" fill="#e9e9ee"/><path d="M1169 212.9L1168.2 219.3L1167.7 225.6L1254.4 232.7L1254.6 226.7L1254.9 220.7Z" fill="#f6f6f9"/><path d="M1160.5 301.5L1159.8 307.8L1159.1 314.1L1158.3 320.4L1269.2 322.6L1269.6 316.7L1270.1 310.8L1270.3 304.9Z" fill="#f6f6f9"/><g fill="none" stroke="#5564b0" stroke-opacity="0.78" stroke-width="0.9"><path d="M1300.7 15.3L1331.6 76.1M1291.7 18.3L1329.7 84.2M1282.6 21.4L1328 91.4M1274.8 24.1L1326.7 96.9M1264 28.5L1324.5 103.2M1255.3 33.4L1322.4 107.9M1246.4 38.4L1320.3 112.3M1237.3 43.6L1318.3 116.6M1230.6 47.7L1316.9 119.6M1221.5 57.1L1314.6 124.7M1214.2 64.7L1311.9 128.1M1206.8 72.4L1308.7 131.3M1198.8 82.2L1304.9 135.1M1192.3 92.9L1301 139M1186.6 102.2L1297.4 142.6M1180.8 111.8L1293.5 146.2M1177.6 124.2L1288.7 150.8M1175.1 136.7L1285.7 156.2M1172.9 145.6L1283.5 160.2M1170.9 152.8L1281.9 163.5M1163.5 161L1280.5 176M1162.6 167.4L1280.4 181.9M1161.8 173.7L1280.3 187.7M1160.9 180.1L1280.2 193.6M1160.1 186.4L1280.1 199.5M1159.2 192.8L1280 205.4M1158.4 199.1L1279.8 211.2M1157.5 205.5L1279.7 217.1M1156.7 211.8L1279.5 223M1155.9 218.2L1279.3 228.8M1155.4 224.6L1279.2 234.7M1154.8 231L1279 240.6M1154.3 237.3L1278.8 246.4M1153.8 243.7L1278.7 252.3M1153.2 250.1L1278.5 258.2M1152.7 256.5L1278.3 264.1M1152.2 262.9L1278.1 269.9M1151.5 269.3L1277.9 275.8M1150.7 275.6L1277.7 281.7M1149.9 282L1277.4 287.5M1149.1 288.4L1277.2 293.4M1148.4 294.7L1277 299.3M1147.6 301.1L1276.8 305.1M1146.8 307.4L1276.5 311M1146 313.8L1276.1 316.9M1145.3 320.2L1275.7 322.7M1144.5 326.5L1275.3 328.6M1143.8 332.9L1274.8 334.4M1143 339.3L1274.4 340.3M1142.3 345.6L1273.9 346.1M1141.5 352L1273.5 352M1140.5 356.6L1272.2 364.6M1139.7 359.9L1270.5 374M1138.1 363.1L1268.9 383.3M1136.5 366.2L1267.3 392.6M1135 369.2L1265.4 401.9M1133.5 372.2L1261.2 410.5M1132 375.1L1257 418.9M1130.1 377.8L1253 427.3M1127.5 380.1L1248.9 435.6M1125.1 382.4L1244.8 444M1122.8 384.6L1240.8 452.3M1120.5 386.7L1236.5 460.5M1118.3 388.8L1230 467.3M1116.2 390.9L1223.6 474M1114.1 392.9L1217.3 480.7M1112 394.9L1211 487.3M1109.5 396.5L1204.7 493.9M1106.9 397.9L1198.3 500.5M1104.4 399.3L1191.5 506.6M1102 400.7L1183.9 511.6M1099.5 402L1176.2 516.6M1097.1 403.4L1168.6 521.6M1094.7 404.7L1161 526.6M1092.1 405.8L1153.3 531.7M1089.5 406.5L1145.5 536.8M1086.8 407.3L1137.5 541.9M1084.7 407.9L1126.3 532.3M1083.2 408.3L1121.5 533.5M1081.2 408.9L1115 535M1079.3 409.7L1108.6 536.6M1077.4 410.6L1102.2 538.1M1075.4 411.5L1095.6 538.9M1073.4 412.5L1089.1 539.7M1071.4 413.4L1082.5 540.6M1069.3 414.4L1075.9 541.4M1067.1 415.4L1069.3 542.2M1064.9 416.5L1062.7 543.1M1062.6 417.6L1055.9 543.9M1060.2 418.2L1049.1 544.8M1057.8 418.5L1042.7 541.5M1055.4 418.8L1037.3 533.3"/><path d="M1301.4 16.8L1292.7 20L1283.7 23.2L1276.1 25.9L1265.5 30.4L1257 35.3L1248.3 40.3L1239.3 45.4L1232.7 49.5L1223.8 58.8L1216.7 66.3L1209.4 73.9L1201.4 83.5L1195 94L1189.4 103.2L1183.6 112.7L1180.4 124.8L1177.9 137.2L1175.7 146L1173.6 153L1166.4 161.4L1165.6 167.7L1164.8 174.1L1163.9 180.4L1163.1 186.7L1162.3 193.1L1161.4 199.4L1160.6 205.8L1159.8 212.1L1159 218.5L1158.5 224.8L1157.9 231.2L1157.4 237.6L1156.9 244L1156.4 250.3L1155.8 256.7L1155.3 263.1L1154.6 269.4L1153.9 275.8L1153.1 282.1L1152.3 288.5L1151.6 294.8L1150.8 301.2L1150.1 307.5L1149.3 313.9L1148.5 320.2L1147.8 326.6L1147 332.9L1146.3 339.3L1145.5 345.6L1144.8 352M1302.8 19.6L1294.4 23L1285.8 26.3L1278.4 29.2L1268.2 33.8L1260 38.6L1251.6 43.6L1242.9 48.7L1236.6 52.7L1228 61.9L1221.1 69.1L1213.9 76.6L1206.2 85.9L1199.9 96.1L1194.3 105.1L1188.7 114.2L1185.4 126L1182.9 138.1L1180.6 146.6L1178.6 153.5L1171.7 162.1L1170.9 168.4L1170.1 174.7L1169.3 181L1168.5 187.3L1167.7 193.6L1166.9 200L1166.1 206.3L1165.3 212.6L1164.5 218.9L1164 225.3L1163.5 231.6L1163 238L1162.5 244.3L1162 250.7L1161.5 257L1161 263.4L1160.3 269.7L1159.6 276.1L1158.8 282.4L1158.1 288.7L1157.4 295L1156.6 301.4L1155.9 307.7L1155.2 314L1154.4 320.4L1153.7 326.7L1152.9 333L1152.2 339.3L1151.5 345.7L1150.7 352M1314.6 42.7L1308.8 48L1303 52.9L1298.2 56.9L1291.2 62.1L1285.5 66.9L1279.7 71.7L1273.8 76.4L1269.4 80L1263.4 87.5L1258.2 93.2L1252.7 98.9L1246.5 106L1241.2 113.7L1236.4 120.4L1231.5 127.3L1227.6 136.2L1224.9 145.5L1222.7 152.2L1220.8 157.6L1216.2 167.8L1215.6 173.9L1215.1 180L1214.6 186.2L1214.1 192.3L1213.6 198.4L1213 204.6L1212.5 210.7L1212 216.8L1211.4 223L1211.1 229.1L1210.7 235.3L1210.3 241.4L1210 247.6L1209.6 253.8L1209.2 259.9L1208.8 266.1L1208.4 272.2L1207.8 278.3L1207.3 284.5L1206.8 290.6L1206.2 296.8L1205.7 302.9L1205.2 309L1204.6 315.2L1204 321.3L1203.4 327.5L1202.7 333.6L1202.1 339.7L1201.5 345.9L1200.9 352M1315.8 45.1L1310.3 50.6L1304.8 55.7L1300.2 59.8L1293.7 65.1L1288.2 69.9L1282.6 74.6L1277 79.4L1272.9 82.9L1267.1 90.3L1262.1 95.8L1256.8 101.3L1250.8 108.1L1245.5 115.5L1240.9 122L1236 128.7L1232 137.2L1229.3 146.3L1227.1 152.7L1225.3 158L1220.8 168.3L1220.3 174.5L1219.9 180.6L1219.4 186.7L1218.9 192.8L1218.4 198.9L1217.9 205.1L1217.4 211.2L1216.9 217.3L1216.4 223.4L1216 229.5L1215.7 235.7L1215.3 241.8L1215 247.9L1214.6 254.1L1214.3 260.2L1213.9 266.3L1213.4 272.5L1212.9 278.6L1212.4 284.7L1211.9 290.8L1211.4 296.9L1210.9 303.1L1210.4 309.2L1209.8 315.3L1209.2 321.4L1208.6 327.5L1208 333.7L1207.4 339.8L1206.8 345.9L1206.2 352M1325.4 63.9L1322.1 71L1318.9 77.4L1316.3 82.3L1312.4 88.3L1309 93L1305.5 97.5L1302.1 102L1299.7 105.2L1296 111.2L1292.4 115.4L1288.3 119.5L1283.7 124.5L1279.2 129.8L1275.2 134.5L1271 139.4L1266.5 145.5L1263.6 152.3L1261.4 157.3L1259.7 161.3L1257.1 173L1256.8 179L1256.6 184.9L1256.3 190.9L1256.1 196.9L1255.8 202.8L1255.5 208.8L1255.2 214.8L1254.9 220.7L1254.6 226.7L1254.4 232.7L1254.2 238.7L1253.9 244.6L1253.7 250.6L1253.4 256.6L1253.2 262.6L1252.9 268.5L1252.6 274.5L1252.3 280.5L1251.9 286.4L1251.6 292.4L1251.3 298.4L1250.9 304.3L1250.6 310.3L1250.1 316.3L1249.6 322.2L1249.1 328.2L1248.6 334.1L1248.1 340.1L1247.6 346L1247.1 352M1326.7 66.4L1323.6 73.6L1320.7 80.2L1318.4 85.3L1314.8 91.3L1311.6 96L1308.5 100.5L1305.4 104.9L1303.1 108.1L1299.7 113.9L1296.3 118L1292.4 121.9L1287.9 126.6L1283.6 131.6L1279.6 136.1L1275.5 140.7L1270.9 146.6L1268 153.1L1265.8 157.8L1264.2 161.8L1261.8 173.6L1261.6 179.5L1261.3 185.5L1261.1 191.4L1260.9 197.4L1260.7 203.3L1260.4 209.3L1260.1 215.2L1259.8 221.2L1259.6 227.1L1259.4 233.1L1259.1 239L1258.9 245L1258.7 250.9L1258.5 256.9L1258.2 262.9L1258 268.8L1257.7 274.8L1257.3 280.7L1257 286.6L1256.7 292.6L1256.4 298.5L1256.1 304.5L1255.8 310.4L1255.3 316.4L1254.8 322.3L1254.3 328.3L1253.9 334.2L1253.4 340.1L1252.9 346.1L1252.4 352M1330.7 74.3L1328.6 82.2L1326.7 89.3L1325.2 94.7L1322.7 101L1320.4 105.6L1318.1 110.1L1315.9 114.4L1314.3 117.5L1311.8 122.7L1309 126.2L1305.7 129.5L1301.7 133.5L1297.7 137.6L1294 141.3L1290.1 145.2L1285.3 150L1282.4 155.6L1280.2 159.7L1278.6 163.1L1277 175.6L1276.9 181.4L1276.7 187.3L1276.6 193.2L1276.5 199.1L1276.4 205L1276.2 210.9L1276 216.7L1275.8 222.6L1275.6 228.5L1275.4 234.4L1275.3 240.3L1275.1 246.2L1274.9 252.1L1274.7 257.9L1274.6 263.8L1274.3 269.7L1274.1 275.6L1273.9 281.5L1273.6 287.4L1273.4 293.2L1273.1 299.1L1272.9 305L1272.6 310.9L1272.2 316.8L1271.8 322.6L1271.3 328.5L1270.9 334.4L1270.4 340.3L1270 346.1L1269.5 352M1148.1 352L1147.1 357L1146.3 360.6L1144.6 364.1L1143.1 367.5L1141.5 370.9L1139.8 374.1L1138.2 377.3L1136.2 380.3L1133.6 382.9L1131.1 385.5L1128.7 388L1126.3 390.4L1123.9 392.7L1121.6 395L1119.2 397.3L1116.9 399.5L1114.3 401.4L1111.5 403.1L1108.8 404.7L1106 406.2L1103.3 407.8L1100.7 409.3L1098 410.8L1095.2 412.1L1092.3 413L1089.4 414M1200.9 352L1199.7 360.2L1198.6 366.3L1197 372.2L1195.4 378.1L1193.7 383.9L1190.9 389.4L1188.3 394.8L1185.4 400.1L1182.1 405.1L1179 410.1L1175.9 415L1172.7 419.9L1168.6 424.1L1164.5 428.3L1160.5 432.4L1156.5 436.5L1152.3 440.3L1148.1 444.1L1143.6 447.6L1138.8 450.6L1134 453.6L1129.3 456.6L1124.5 459.6L1119.6 462.4L1114.7 465.1L1109.6 467.9M1206.2 352L1205 360.5L1203.8 366.8L1202.2 373L1200.6 379.1L1198.9 385.2L1196 390.9L1193.3 396.6L1190.3 402.1L1187 407.3L1183.8 412.6L1180.6 417.8L1177.4 422.9L1173.1 427.3L1168.8 431.6L1164.6 435.9L1160.5 440.1L1156.1 444.2L1151.7 448.2L1147.1 451.9L1142.1 455L1137.1 458.2L1132.1 461.3L1127.1 464.4L1122.1 467.5L1116.9 470.3L1111.7 473.3M1247.1 352L1245.8 363L1244.4 371.2L1242.7 379.3L1241.1 387.3L1239.3 395.3L1235.6 402.8L1232 410.2L1228.4 417.4L1224.6 424.5L1220.9 431.6L1217.2 438.7L1213.3 445.8L1207.7 451.6L1202.1 457.4L1196.6 463.1L1191.2 468.8L1185.6 474.4L1180.1 480L1174.1 485.2L1167.5 489.4L1160.9 493.7L1154.3 498L1147.7 502.2L1141 506.5L1134.3 510.7L1127.4 515M1252.4 352L1251.1 363.3L1249.6 371.7L1248 380.1L1246.4 388.4L1244.5 396.6L1240.7 404.3L1237 411.9L1233.3 419.4L1229.5 426.8L1225.7 434.1L1221.9 441.4L1217.9 448.7L1212.1 454.8L1206.4 460.7L1200.7 466.6L1195.1 472.5L1189.4 478.3L1183.7 484.1L1177.6 489.4L1170.8 493.9L1164 498.3L1157.2 502.7L1150.4 507.1L1143.5 511.5L1136.5 515.9L1129.4 520.4M1266.9 352L1265.6 364.2L1264 373.3L1262.4 382.3L1260.7 391.3L1258.9 400.2L1254.8 408.5L1250.8 416.7L1246.8 424.8L1242.8 432.9L1238.8 440.9L1234.9 448.9L1230.7 456.8L1224.4 463.4L1218.2 469.9L1212.1 476.3L1206 482.6L1199.9 489L1193.8 495.3L1187.2 501.2L1179.8 506.1L1172.4 510.9L1165 515.7L1157.6 520.5L1150.2 525.4L1142.7 530.2L1135 535.2M1087.2 415.4L1085.5 415.8L1083.3 416.5L1081.1 417.3L1078.9 418.3L1076.6 419.2L1074.4 420.1L1072 421.1L1069.7 422L1067.2 423L1064.7 424.1L1062.2 425.1L1059.5 425.8L1056.9 425.9L1054.3 425.7M1097.2 445.2L1094.7 445.9L1091.4 446.7L1088.1 447.8L1084.8 448.9L1081.5 449.8L1078.1 450.7L1074.7 451.6L1071.3 452.5L1067.8 453.5L1064.2 454.5L1060.6 455.5L1056.9 456.2L1053.3 455.4L1050 453.2M1107.6 476.3L1104.3 477.2L1099.8 478.3L1095.4 479.5L1091 480.7L1086.5 481.6L1082 482.5L1077.5 483.4L1072.9 484.3L1068.3 485.2L1063.7 486.1L1058.9 487.1L1054.1 487.8L1049.5 486.1L1045.4 481.8M1118 507.5L1113.8 508.5L1108.3 509.8L1102.8 511.2L1097.2 512.6L1091.6 513.4L1085.9 514.3L1080.3 515.1L1074.6 516L1068.9 516.9L1063.1 517.8L1057.3 518.7L1051.3 519.5L1045.8 516.9L1040.9 510.4M1123 522.4L1118.4 523.5L1112.3 525L1106.3 526.4L1100.2 527.9L1094 528.7L1087.8 529.6L1081.6 530.4L1075.4 531.2L1069.1 532.1L1062.8 533L1056.5 533.8L1050 534.7L1043.9 531.6L1038.7 524.1M1161.5 357.8L1160.6 362.2L1159 366.4L1157.4 370.4L1155.8 374.5L1153.9 378.3L1152 382.1L1149.7 385.7L1146.9 389L1144.3 392.2L1141.7 395.4L1139.1 398.5L1136.2 401.4L1133.4 404.2L1130.6 406.9L1127.8 409.7L1124.7 412.1L1121.6 414.3L1118.4 416.5L1115.1 418.4L1111.8 420.4L1108.5 422.3L1105.3 424.2L1101.9 425.9L1098.4 427.4L1094.9 428.8M1187.9 359.5L1186.8 365L1185.2 370.4L1183.6 375.7L1181.9 381L1179.4 386L1177 390.9L1174.3 395.6L1171.2 400.1L1168.2 404.6L1165.3 409L1162.3 413.3L1158.5 417.1L1154.9 420.8L1151.2 424.5L1147.6 428.1L1143.8 431.6L1139.8 434.8L1135.8 437.9L1131.4 440.6L1127.1 443.3L1122.8 445.9L1118.5 448.6L1114.1 451.1L1109.6 453.4L1105.1 455.8M1219.5 361.4L1218.2 368.4L1216.6 375.2L1215 382L1213.2 388.8L1210.1 395.2L1207 401.4L1203.8 407.5L1200.3 413.4L1196.9 419.3L1193.6 425.2L1190.1 431L1185.3 435.9L1180.6 440.8L1176 445.5L1171.4 450.3L1166.6 454.9L1161.8 459.5L1156.7 463.7L1151.1 467.3L1145.5 470.8L1140 474.3L1134.4 477.9L1128.8 481.3L1123.1 484.7L1117.2 488.1M1227.4 361.9L1226.1 369.2L1224.4 376.4L1222.8 383.6L1221 390.8L1217.8 397.5L1214.5 404L1211.2 410.5L1207.6 416.8L1204.1 423L1200.7 429.3L1197.1 435.4L1192 440.6L1187.1 445.7L1182.2 450.8L1177.3 455.9L1172.3 460.8L1167.3 465.6L1161.9 470.1L1156 473.9L1150.1 477.7L1144.3 481.4L1138.4 485.2L1132.5 488.9L1126.4 492.5L1120.3 496.2M1259 363.8L1257.5 372.6L1255.8 381.3L1254.2 390L1252.3 398.6L1248.4 406.6L1244.5 414.6L1240.7 422.4L1236.7 430.1L1232.9 437.8L1229 445.5L1224.9 453.2L1218.8 459.5L1212.9 465.7L1206.9 471.9L1201.1 478L1195.1 484.1L1189.2 490.2L1182.8 495.9L1175.7 500.5L1168.6 505.2L1161.5 509.8L1154.3 514.4L1147.1 519.1L1139.9 523.7L1132.5 528.5M1302.8 19.6L1296.2 42.4M1309.9 33.6L1285.8 26.3M1315.8 45.1L1318.9 77.4M1325.4 63.9L1304.8 55.7M1285.8 26.3L1282.2 50.9M1296.2 42.4L1268.2 33.8M1304.8 55.7L1312.4 88.3M1318.9 77.4L1293.7 65.1M1268.2 33.8L1268.6 60.6M1282.2 50.9L1251.6 43.6M1293.7 65.1L1305.5 97.5M1312.4 88.3L1282.6 74.6M1251.6 43.6L1256.5 69.3M1268.6 60.6L1236.6 52.7M1282.6 74.6L1299.7 105.2M1305.5 97.5L1272.9 82.9M1236.6 52.7L1243.5 83.7M1256.5 69.3L1221.1 69.1M1272.9 82.9L1292.4 115.4M1299.7 105.2L1262.1 95.8M1221.1 69.1L1230.6 98M1243.5 83.7L1206.2 85.9M1262.1 95.8L1283.7 124.5M1292.4 115.4L1250.8 108.1M1206.2 85.9L1219.8 114.3M1230.6 98L1194.3 105.1M1250.8 108.1L1275.2 134.5M1283.7 124.5L1240.9 122M1194.3 105.1L1210.9 132.2M1219.8 114.3L1185.4 126M1240.9 122L1266.5 145.5M1275.2 134.5L1232 137.2M1185.4 126L1206.1 150M1210.9 132.2L1180.6 146.6M1232 137.2L1261.4 157.3M1266.5 145.5L1227.1 152.7M1180.6 146.6L1204.2 156M1206.1 150L1178.6 153.5M1227.1 152.7L1259.7 161.3M1261.4 157.3L1225.3 158"/></g><g fill="none" stroke="#4a5aac" stroke-opacity="0.85" stroke-width="1.5"><path d="M1192.1 127.6L1189.5 139.2L1187.3 147.5L1185.3 154.2L1178.7 162.9L1178 169.2L1177.2 175.5L1176.4 181.8L1175.7 188.1L1174.9 194.4L1174.2 200.7L1173.4 207L1172.7 213.3L1171.9 219.6L1171.5 225.9L1171 232.2L1170.5 238.5L1170 244.9L1169.5 251.2L1169 257.5L1168.5 263.8L1167.9 270.1L1167.2 276.4L1166.5 282.7L1165.8 289L1165.1 295.3L1164.4 301.6L1163.7 307.9L1163 314.2L1162.2 320.5L1161.5 326.8L1160.8 333.1L1160.1 339.4L1159.4 345.7L1158.7 352M1238.7 121.2L1233.8 128L1229.8 136.7L1227.1 145.9L1224.9 152.4L1223.1 157.8L1218.5 168.1L1218 174.2L1217.5 180.3L1217 186.4L1216.5 192.6L1216 198.7L1215.5 204.8L1214.9 210.9L1214.4 217.1L1213.9 223.2L1213.5 229.3L1213.2 235.5L1212.8 241.6L1212.5 247.8L1212.1 253.9L1211.7 260.1L1211.4 266.2L1210.9 272.3L1210.4 278.5L1209.9 284.6L1209.3 290.7L1208.8 296.9L1208.3 303L1207.8 309.1L1207.2 315.2L1206.6 321.4L1206 327.5L1205.4 333.6L1204.8 339.7L1204.1 345.9L1203.5 352L1202.4 360.3L1201.2 366.5M1312.4 88.3L1309 93L1305.5 97.5L1302.1 102L1299.7 105.2L1296 111.2L1292.4 115.4L1288.3 119.5L1283.7 124.5L1279.2 129.8L1275.2 134.5L1271 139.4L1266.5 145.5L1263.6 152.3L1261.4 157.3L1259.7 161.3L1257.1 173L1256.8 179L1256.6 184.9L1256.3 190.9L1256.1 196.9L1255.8 202.8L1255.5 208.8L1255.2 214.8L1254.9 220.7L1254.6 226.7L1254.4 232.7L1254.2 238.7L1253.9 244.6L1253.7 250.6L1253.4 256.6L1253.2 262.6L1252.9 268.5L1252.6 274.5L1252.3 280.5L1251.9 286.4L1251.6 292.4L1251.3 298.4L1250.9 304.3L1250.6 310.3L1250.1 316.3L1249.6 322.2L1249.1 328.2L1248.6 334.1L1248.1 340.1L1247.6 346L1247.1 352L1245.8 363L1244.4 371.2M1179.1 345.8L1178.5 352L1177.4 358.8L1176.3 363.9L1174.7 368.8L1173.1 373.6L1171.5 378.4L1169.2 382.9L1167 387.4L1164.5 391.7L1161.5 395.7L1158.6 399.6L1155.8 403.5L1153 407.4L1149.6 410.8L1146.3 414.1L1143 417.5L1139.7 420.7L1136.2 423.8L1132.5 426.6L1128.8 429.4L1124.9 431.8L1121 434.1L1117.1 436.5L1113.2 438.8L1109.2 441L1105.1 443L1101 445M1237.1 346L1236.5 352L1235.3 362.4L1233.9 370L1232.3 377.7L1230.7 385.2L1228.9 392.7L1225.4 399.7L1222 406.7L1218.5 413.5L1214.9 420.1L1211.3 426.7L1207.7 433.3L1204 439.9L1198.7 445.3L1193.5 450.7L1188.4 456.1L1183.2 461.4L1178 466.6L1172.7 471.8L1167.2 476.6L1160.9 480.6L1154.8 484.5L1148.6 488.5L1142.4 492.5L1136.1 496.4L1129.8 500.3L1123.3 504.2M1296.2 42.4L1290.4 45.9L1282.2 50.9L1275.4 55.8L1268.6 60.6L1261.6 65.5L1256.5 69.3L1249.4 77.4L1243.5 83.7L1237.4 90.1L1230.6 98L1224.9 106.7L1219.8 114.3L1214.6 122.1L1210.9 132.2L1208.3 142.6L1206.1 150L1204.2 156M1161.8 403L1237.1 458.6M1122.4 406.6L1194 505M1098 409L1132 545M1244.8 444L1240.8 452.3L1236.5 460.5L1230 467.3L1223.6 474L1217.3 480.7L1211 487.3L1204.7 493.9L1198.3 500.5L1191.5 506.6L1183.9 511.6L1176.2 516.6L1168.6 521.6L1161 526.6L1153.3 531.7L1145.5 536.8L1137.5 541.9M1068 420L1062 470M1071 420L1066 470M1074 420L1070 470M1088 450L1098 520M1091 450L1101 520M1094 450L1104 520M1046 481L1062 476L1060 520L1040 527M1167.7 174.4L1262.5 185.6M1163.6 206.1L1261.3 215.4M1159.5 250.5L1259.7 257M1154 301.3L1257.4 304.5M1150.3 333L1255.2 334.2M1274.8 24.1L1326.7 96.9M1237.3 43.6L1318.3 116.6M1206.8 72.4L1308.7 131.3M1180.8 111.8L1293.5 146.2"/></g></g><g fill="none" stroke="#5c5c62" stroke-width="1.2"><path d="M1301 15.2L1267.6 26.5L1231.2 47L1201 78.5L1179.7 113.6L1174.5 140"/><path d="M1301 15.2L1330 74.2"/><path d="M1139.7 360L1129 378.7L1111.2 395.6L1093.4 405.4L1080.9 409L1081.4 386.7L1060.4 371L1061.6 418"/><path d="M1132.4 545.3L1127.8 532L1102.7 538L1045.3 545.3L1035.3 530.3L1049 535.6"/><path d="M1054 419L1035.3 530.3L1040.5 528.5L1060.4 419Z"/><path d="M1051.8 432.4L1058 432.1"/><path d="M1049.3 446.8L1055.4 446.4"/><path d="M1046.9 461.3L1052.8 460.6"/><path d="M1044.7 474.6L1050.5 473.8"/><path d="M1042.4 488L1048.1 486.9"/><path d="M1040 502.5L1045.5 501.1"/><path d="M1037.5 516.9L1042.9 515.4"/></g><path d="M1266.7 28.8L1266 53M1297.9 18.2L1294.8 45.5M1203.3 80.3L1204.8 101.5M1239.4 97V118.2M1185.2 115.2L1186.7 133.3M1284.2 93.9L1281.2 121.2M1307 80.3L1300.9 107.6M1267.6 112.1L1266 133.3M1258.5 130.3L1257 163.6" stroke="#5663a6" stroke-width="2.2" stroke-opacity="0.9" fill="none"/><path d="M1231.2 54.5V72.7M1235.8 57.6V69.7M1255.5 45.5V59M1260 75.8L1258.5 100M1288.8 57.6L1284.2 83.3" stroke="#a4a4ac" stroke-width="1.1" fill="none"/><path d="M1301.8 119.7L1313 116.7L1313 128.8L1300 136.4Z" fill="#000"/><path d="M1300 136.4L1313 128.8" stroke="#5663a6" stroke-width="2.4" fill="none"/><path d="M1065.5 371.5l4 5m.5-4.5l-5 4M1072.5 376.5l4 5m.5-4.5l-5 4M1079.5 383l4 5m.5-4.5l-5 4" stroke="#4c4c50" stroke-width="1.5" fill="none"/><path d="M1187.9 342.4L1203.9 343.6L1197.9 373.6L1180.9 368.6Z" fill="#000"/><path d="M1156 367.4L1164.7 366.1L1167.2 369.9L1162.2 379.8L1153.5 376.1Z" fill="#000"/><path d="M1218.4 172h18.7v3h-18.7zM1176 180h10.4v3h-10.4z" fill="#000"/></svg>
</body></html>
